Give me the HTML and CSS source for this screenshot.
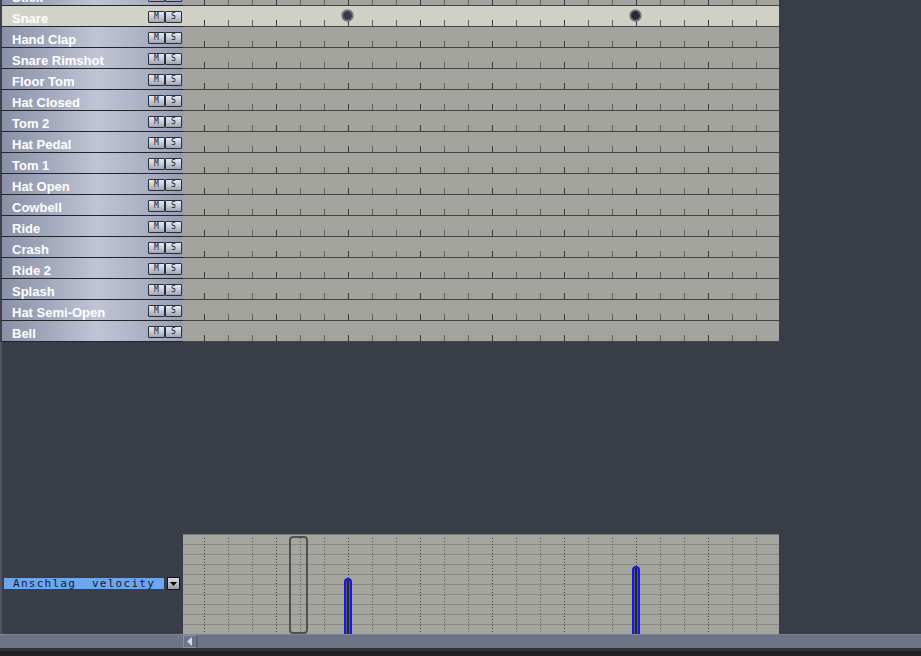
FILE: index.html
```html
<!DOCTYPE html>
<html>
<head>
<meta charset="utf-8">
<link rel="stylesheet" href="styles.css">
</head>
<body>
<div class="editor">
  <div class="rows">
    <div class="row"><div class="label"><span class="name">Stick</span><span class="btns"><span class="btn">M</span><span class="btn">S</span></span></div><div class="lane"></div></div>
    <div class="row selected"><div class="label"><span class="name">Snare</span><span class="btns"><span class="btn">M</span><span class="btn">S</span></span></div><div class="lane">
      <svg class="note n1" width="13" height="13" viewBox="0 0 13 13"><circle cx="6.5" cy="6.5" r="5.3" fill="#3b3a4c" stroke="#767674" stroke-width="1.8"/></svg>
      <svg class="note n2" width="13" height="13" viewBox="0 0 13 13"><circle cx="6.5" cy="6.5" r="5.3" fill="#2a2a36" stroke="#767674" stroke-width="1.8"/></svg>
    </div></div>
    <div class="row"><div class="label"><span class="name">Hand Clap</span><span class="btns"><span class="btn">M</span><span class="btn">S</span></span></div><div class="lane"></div></div>
    <div class="row"><div class="label"><span class="name">Snare Rimshot</span><span class="btns"><span class="btn">M</span><span class="btn">S</span></span></div><div class="lane"></div></div>
    <div class="row"><div class="label"><span class="name">Floor Tom</span><span class="btns"><span class="btn">M</span><span class="btn">S</span></span></div><div class="lane"></div></div>
    <div class="row"><div class="label"><span class="name">Hat Closed</span><span class="btns"><span class="btn">M</span><span class="btn">S</span></span></div><div class="lane"></div></div>
    <div class="row"><div class="label"><span class="name">Tom 2</span><span class="btns"><span class="btn">M</span><span class="btn">S</span></span></div><div class="lane"></div></div>
    <div class="row"><div class="label"><span class="name">Hat Pedal</span><span class="btns"><span class="btn">M</span><span class="btn">S</span></span></div><div class="lane"></div></div>
    <div class="row"><div class="label"><span class="name">Tom 1</span><span class="btns"><span class="btn">M</span><span class="btn">S</span></span></div><div class="lane"></div></div>
    <div class="row"><div class="label"><span class="name">Hat Open</span><span class="btns"><span class="btn">M</span><span class="btn">S</span></span></div><div class="lane"></div></div>
    <div class="row"><div class="label"><span class="name">Cowbell</span><span class="btns"><span class="btn">M</span><span class="btn">S</span></span></div><div class="lane"></div></div>
    <div class="row"><div class="label"><span class="name">Ride</span><span class="btns"><span class="btn">M</span><span class="btn">S</span></span></div><div class="lane"></div></div>
    <div class="row"><div class="label"><span class="name">Crash</span><span class="btns"><span class="btn">M</span><span class="btn">S</span></span></div><div class="lane"></div></div>
    <div class="row"><div class="label"><span class="name">Ride 2</span><span class="btns"><span class="btn">M</span><span class="btn">S</span></span></div><div class="lane"></div></div>
    <div class="row"><div class="label"><span class="name">Splash</span><span class="btns"><span class="btn">M</span><span class="btn">S</span></span></div><div class="lane"></div></div>
    <div class="row"><div class="label"><span class="name">Hat Semi-Open</span><span class="btns"><span class="btn">M</span><span class="btn">S</span></span></div><div class="lane"></div></div>
    <div class="row"><div class="label"><span class="name">Bell</span><span class="btns"><span class="btn">M</span><span class="btn">S</span></span></div><div class="lane"></div></div>
  </div>

  <div class="lower">
    <div class="lower-side">
      <div class="select">
        <div class="select-field">Anschlag  velocity</div>
        <div class="select-btn"><svg width="7" height="4" viewBox="0 0 7 4"><polygon points="0,0 7,0 3.5,4" fill="#000"/></svg></div>
      </div>
    </div>
    <div class="lower-main">
      <div class="vel-panel">
        <svg class="vel-grid" width="596" height="99" viewBox="0 0 596 99">
          <defs>
            <pattern id="dots" x="0" y="0" width="24" height="3" patternUnits="userSpaceOnUse">
              <rect x="21" y="0" width="1" height="1" fill="#5a5a56"/>
            </pattern>
            <pattern id="dots2" x="0" y="0" width="72" height="3" patternUnits="userSpaceOnUse">
              <rect x="21" y="0" width="1" height="1" fill="#3a3a38"/>
            </pattern>
            <pattern id="hl" x="0" y="0" width="596" height="10" patternUnits="userSpaceOnUse">
              <rect x="0" y="9" width="596" height="1" fill="#8a8a84"/>
            </pattern>
          </defs>
          <rect x="0" y="0" width="596" height="99" fill="url(#hl)"/>
          <rect x="0" y="2" width="580" height="96" fill="url(#dots)"/>
          <rect x="0" y="2" width="580" height="96" fill="url(#dots2)"/>
        </svg>
        <div class="cursor"></div>
        <div class="vbar b1"></div>
        <div class="vbar b2"></div>
      </div>
    </div>
  </div>

  <div class="scrollbar">
    <div class="scroll-side"></div>
    <div class="scroll-arrow"><svg width="6" height="9" viewBox="0 0 6 9"><polygon points="5,0 5,9 0,4.5" fill="#d4d8e4"/></svg></div>
    <div class="scroll-track"></div>
  </div>
  <div class="bottom"></div>
</div>
</body>
</html>
```

FILE: styles.css
```css
html, body {
  margin: 0;
  padding: 0;
  background: #393d48;
  overflow: hidden;
  width: 921px;
  height: 656px;
}

.editor {
  width: 921px;
  height: 656px;
  display: flex;
  flex-direction: column;
  overflow: hidden;
  font-family: "Liberation Sans", Arial, sans-serif;
}

.rows {
  margin-top: -15px;
  display: flex;
  flex-direction: column;
}

.row {
  display: flex;
  height: 21px;
}

.label {
  box-sizing: border-box;
  width: 183px;
  height: 21px;
  display: flex;
  align-items: flex-start;
  justify-content: space-between;
  padding-left: 12px;
  padding-right: 1px;
  border-left: 2px solid #3e4250;
  border-bottom: 1px solid #23252c;
  background: linear-gradient(to right, #8a90a6 0%, #a2a8bc 25%, #c0c4d5 52%, #aeb3c6 75%, #989db2 100%);
}

.name {
  color: #ffffff;
  font-weight: bold;
  font-size: 13px;
  line-height: 13px;
  padding-top: 6px;
  margin-left: -2px;
}

.row.selected .label {
  background: #d2d3c8;
}

.btns {
  display: flex;
  margin-top: 5px;
}

.btn {
  box-sizing: border-box;
  width: 17px;
  height: 12px;
  border: 1px solid #2c2e36;
  border-radius: 1px;
  background: linear-gradient(to bottom, #e6e9f0 0%, #c4c8d4 55%, #a0a4b2 100%);
  color: #14161c;
  font-family: "DejaVu Sans Mono", monospace;
  font-size: 8px;
  font-weight: normal;
  line-height: 10px;
  text-align: center;
}

.lane {
  position: relative;
  box-sizing: border-box;
  width: 596px;
  height: 21px;
  border-bottom: 1px solid #424346;
  background-color: #a4a49e;
  background-image:
    linear-gradient(to right, transparent 21px, #3a3a3a 21px, #3a3a3a 22px, transparent 22px),
    linear-gradient(to right, transparent 21px, #5e5e5c 21px, #5e5e5c 22px, transparent 22px);
  background-size: 72px 6px, 24px 6px;
  background-position: 0 bottom, 0 bottom;
  background-repeat: repeat-x, repeat-x;
}

.row.selected .lane {
  background-color: #d0d0c6;
}

.note {
  position: absolute;
  top: 3px;
}
.note.n1 { left: 158px; }
.note.n2 { left: 446px; }

.lower {
  display: flex;
  height: 292px;
}

.lower-side {
  box-sizing: border-box;
  width: 183px;
  border-left: 2px solid #525664;
  display: flex;
  flex-direction: column;
  justify-content: flex-end;
  padding-bottom: 44px;
}

.select {
  display: flex;
  align-items: center;
  gap: 3px;
  margin-left: 2px;
}

.select-field {
  box-sizing: border-box;
  width: 160px;
  height: 11px;
  background: #6ea6ee;
  color: #0e1c30;
  font-family: "DejaVu Sans Mono", monospace;
  font-size: 11px;
  line-height: 11px;
  letter-spacing: 1.27px;
  padding-left: 9px;
  white-space: pre;
  overflow: hidden;
}

.select-btn {
  box-sizing: border-box;
  width: 13px;
  height: 13px;
  border: 1px solid #15161a;
  background: linear-gradient(to bottom, #d8dae2, #9a9eaa);
  display: flex;
  align-items: center;
  justify-content: center;
}

.lower-main {
  width: 596px;
  display: flex;
  flex-direction: column;
  justify-content: flex-end;
}

.vel-panel {
  position: relative;
  box-sizing: border-box;
  width: 596px;
  height: 100px;
  background: #a5a59f;
  border-top: 1px solid #7c7c78;
}

.vel-grid {
  display: block;
}

.cursor {
  position: absolute;
  left: 106px;
  top: 1px;
  width: 15px;
  height: 94px;
  border: 2px solid #505050;
  border-radius: 4px;
}

.vbar {
  position: absolute;
  bottom: 0;
  width: 4px;
  background: linear-gradient(to right, #5a5a5a 0, #5a5a5a 1px, #26262a 1px, #26262a 3px, #5a5a5a 3px);
  border: 2px solid #1414ff;
  border-bottom: none;
  border-radius: 4px 4px 0 0;
}
.vbar.b1 { left: 161px; height: 54px; }
.vbar.b2 { left: 449px; height: 66px; }

.scrollbar {
  display: flex;
  height: 14px;
  background: #6e7487;
  border-top: 1px solid #7e8598;
  box-sizing: border-box;
}

.scroll-side {
  width: 183px;
}

.scroll-arrow {
  box-sizing: border-box;
  width: 14px;
  height: 13px;
  border: 1px solid #8a90a2;
  border-right-color: #5a5f70;
  display: flex;
  align-items: center;
  justify-content: center;
}

.scroll-track {
  flex: 1;
  border-left: 1px solid #5e6374;
}

.bottom {
  height: 8px;
  background: linear-gradient(to bottom, #2e3036 0, #2e3036 3px, #1c2320 3px);
}
```
